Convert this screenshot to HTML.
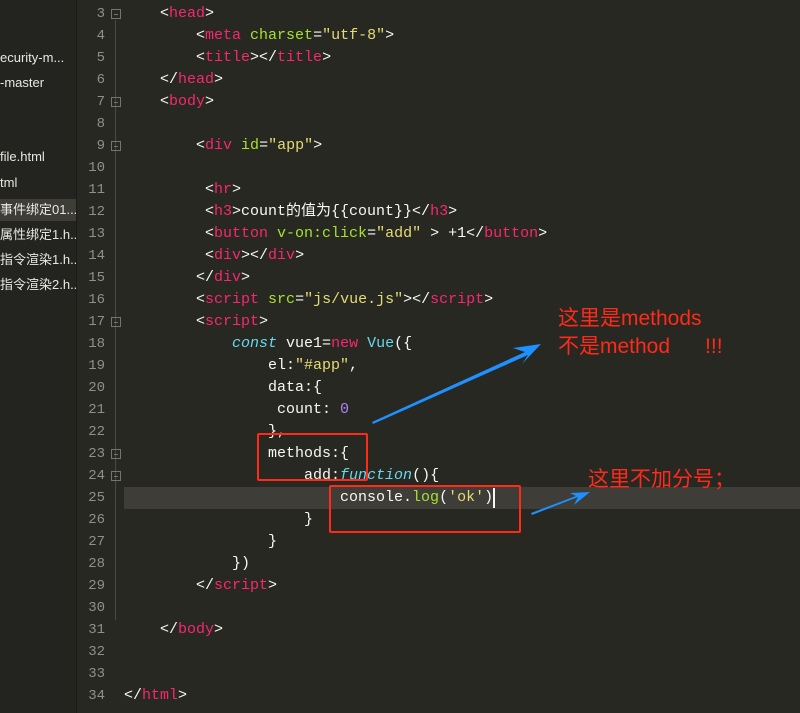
<!DOCTYPE html><html><head><meta charset="utf-8"><style>
body{margin:0;width:800px;height:713px;background:#272822;overflow:hidden;position:relative;font-family:"Liberation Mono",monospace}
#side{position:absolute;left:0;top:0;width:76px;height:713px;background:#232320;border-right:1px solid #1a1a18}
.f{position:absolute;left:0;height:22px;line-height:22px;font:13px "Liberation Sans","Noto Sans CJK SC",sans-serif;color:#e8e8e2;white-space:nowrap;width:76px;overflow:hidden}
.sel{background:#3e3d37}
.l{position:absolute;left:0;width:800px;height:22px;line-height:22px;font-size:15px;color:#f8f8f2;white-space:pre}
.n{position:absolute;left:80px;width:25px;text-align:right;color:#8f908a;font-size:14px}
.c{position:absolute;left:124px}
.t{color:#f92672}.a{color:#a6e22e}.s{color:#e6db74}.k{color:#66d9ef;font-style:italic}.p{color:#ae81ff}
.fold{position:absolute;left:111px;top:6px;width:8px;height:8px;border:1px solid #75756f}
.fold:after{content:"";position:absolute;left:2px;top:4px;width:4px;height:1px;background:#75756f}
.r{position:absolute;border:2px solid #ff2a1a;border-radius:2px}
.ann{position:absolute;color:#ff2a1a;font:21px "Liberation Sans","Noto Sans CJK SC",sans-serif;white-space:pre}
</style></head><body>
<div id="side">
<div class="f" style="top:50px">ecurity-m...</div>
<div class="f" style="top:75px">-master</div>
<div class="f" style="top:149px">file.html</div>
<div class="f" style="top:175px">tml</div>
<div class="f sel" style="top:199px">事件绑定01....</div>
<div class="f" style="top:224px">属性绑定1.h...</div>
<div class="f" style="top:249px">指令渲染1.h...</div>
<div class="f" style="top:274px">指令渲染2.h...</div>
</div>
<div style="position:absolute;left:124px;top:487px;width:676px;height:22px;background:#3e3d37"></div>
<div style="position:absolute;left:115px;top:20px;width:1px;height:600px;background:#4a4a44"></div>

<div class="l" style="top:3px"><span class="n">3</span><span class="fold"></span><span class="c">    &lt;<span class="t">head</span>&gt;</span></div>
<div class="l" style="top:25px"><span class="n">4</span><span class="c">        &lt;<span class="t">meta</span> <span class="a">charset</span>=<span class="s">"utf-8"</span>&gt;</span></div>
<div class="l" style="top:47px"><span class="n">5</span><span class="c">        &lt;<span class="t">title</span>&gt;&lt;/<span class="t">title</span>&gt;</span></div>
<div class="l" style="top:69px"><span class="n">6</span><span class="c">    &lt;/<span class="t">head</span>&gt;</span></div>
<div class="l" style="top:91px"><span class="n">7</span><span class="fold"></span><span class="c">    &lt;<span class="t">body</span>&gt;</span></div>
<div class="l" style="top:113px"><span class="n">8</span></div>
<div class="l" style="top:135px"><span class="n">9</span><span class="fold"></span><span class="c">        &lt;<span class="t">div</span> <span class="a">id</span>=<span class="s">"app"</span>&gt;</span></div>
<div class="l" style="top:157px"><span class="n">10</span></div>
<div class="l" style="top:179px"><span class="n">11</span><span class="c">         &lt;<span class="t">hr</span>&gt;</span></div>
<div class="l" style="top:201px"><span class="n">12</span><span class="c">         &lt;<span class="t">h3</span>&gt;count的值为{{count}}&lt;/<span class="t">h3</span>&gt;</span></div>
<div class="l" style="top:223px"><span class="n">13</span><span class="c">         &lt;<span class="t">button</span> <span class="a">v-on:click</span>=<span class="s">"add"</span> &gt; +1&lt;/<span class="t">button</span>&gt;</span></div>
<div class="l" style="top:245px"><span class="n">14</span><span class="c">         &lt;<span class="t">div</span>&gt;&lt;/<span class="t">div</span>&gt;</span></div>
<div class="l" style="top:267px"><span class="n">15</span><span class="c">        &lt;/<span class="t">div</span>&gt;</span></div>
<div class="l" style="top:289px"><span class="n">16</span><span class="c">        &lt;<span class="t">script</span> <span class="a">src</span>=<span class="s">"js/vue.js"</span>&gt;&lt;/<span class="t">script</span>&gt;</span></div>
<div class="l" style="top:311px"><span class="n">17</span><span class="fold"></span><span class="c">        &lt;<span class="t">script</span>&gt;</span></div>
<div class="l" style="top:333px"><span class="n">18</span><span class="c">            <span class="k">const</span> vue1=<span class="t">new</span> <span class="k" style="font-style:normal">Vue</span>({</span></div>
<div class="l" style="top:355px"><span class="n">19</span><span class="c">                el:<span class="s">"#app"</span>,</span></div>
<div class="l" style="top:377px"><span class="n">20</span><span class="c">                data:{</span></div>
<div class="l" style="top:399px"><span class="n">21</span><span class="c">                 count: <span class="p">0</span></span></div>
<div class="l" style="top:421px"><span class="n">22</span><span class="c">                },</span></div>
<div class="l" style="top:443px"><span class="n">23</span><span class="fold"></span><span class="c">                methods:{</span></div>
<div class="l" style="top:465px"><span class="n">24</span><span class="fold"></span><span class="c">                    add:<span class="k">function</span>(){</span></div>
<div class="l" style="top:487px"><span class="n">25</span><span class="c">                        console.<span class="a">log</span>(<span class="s">'ok'</span>)</span></div>
<div class="l" style="top:509px"><span class="n">26</span><span class="c">                    }</span></div>
<div class="l" style="top:531px"><span class="n">27</span><span class="c">                }</span></div>
<div class="l" style="top:553px"><span class="n">28</span><span class="c">            })</span></div>
<div class="l" style="top:575px"><span class="n">29</span><span class="c">        &lt;/<span class="t">script</span>&gt;</span></div>
<div class="l" style="top:597px"><span class="n">30</span></div>
<div class="l" style="top:619px"><span class="n">31</span><span class="c">    &lt;/<span class="t">body</span>&gt;</span></div>
<div class="l" style="top:641px"><span class="n">32</span></div>
<div class="l" style="top:663px"><span class="n">33</span></div>
<div class="l" style="top:685px"><span class="n">34</span><span class="c">&lt;/<span class="t">html</span>&gt;</span></div>
<div style="position:absolute;left:493px;top:488px;width:2px;height:20px;background:#f8f8f0"></div>

<div class="r" style="left:257px;top:433px;width:107px;height:44px"></div>
<div class="r" style="left:329px;top:485px;width:188px;height:44px"></div>
<div class="ann" style="left:558px;top:302px">这里是methods</div>
<div class="ann" style="left:558px;top:330px">不是method      !!!</div>
<div class="ann" style="left:588px;top:463px">这里不加分号；</div>
<svg style="position:absolute;left:0;top:0" width="800" height="713">
<polygon points="373,424 528,355 522,364 541,344 513,348 525,352 372,422" fill="#1e90ff"/>
<polygon points="532,515 578,497 574,505 590,492 570,493 576,496 531,513" fill="#1e90ff"/>
</svg>
</body></html>
